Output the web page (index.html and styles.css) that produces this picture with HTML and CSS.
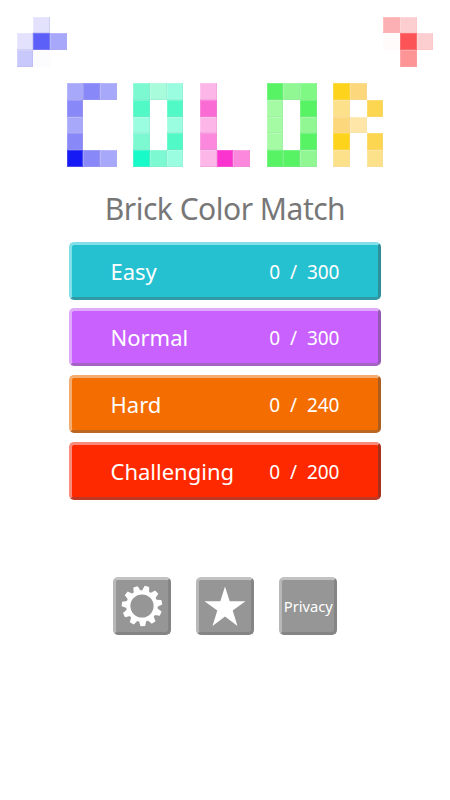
FILE: index.html
```
<!DOCTYPE html>
<html lang="en">
<head>
    <meta charset="UTF-8">
    <meta name="viewport" content="width=device-width, initial-scale=1.0">
    <title>Brick Color Match</title>
    <link rel="stylesheet" href="styles.css">
</head>
<body>
    <div class="corners">
        <div class="bricks blue">
            <i></i><i class="t1"></i><i></i>
            <i class="t1"></i><i class="t5"></i><i class="t3"></i>
            <i class="t2"></i><i class="t0"></i><i></i>
        </div>
        <div class="bricks red">
            <i class="t3"></i><i class="t2"></i><i></i>
            <i class="t0"></i><i class="t5"></i><i class="t2"></i>
            <i></i><i class="t4"></i><i></i>
        </div>
    </div>

    <div class="logo">
        <div class="bricks blue">
            <i class="t3"></i><i class="t4"></i><i class="t3"></i>
            <i class="t4"></i><i></i><i></i>
            <i class="t3"></i><i></i><i></i>
            <i class="t4"></i><i></i><i></i>
            <i class="t6"></i><i class="t4"></i><i class="t3"></i>
        </div>
        <div class="bricks mint">
            <i class="t4"></i><i class="t2"></i><i class="t3"></i>
            <i class="t5"></i><i></i><i class="t5"></i>
            <i class="t3"></i><i></i><i class="t3"></i>
            <i class="t4"></i><i></i><i class="t5"></i>
            <i class="t6"></i><i class="t4"></i><i class="t3"></i>
        </div>
        <div class="bricks pink">
            <i class="t3"></i><i></i><i></i>
            <i class="t5"></i><i></i><i></i>
            <i class="t3"></i><i></i><i></i>
            <i class="t4"></i><i></i><i></i>
            <i class="t3"></i><i class="t6"></i><i class="t4"></i>
        </div>
        <div class="bricks green">
            <i class="t6"></i><i class="t4"></i><i class="t5"></i>
            <i class="t3"></i><i></i><i class="t6"></i>
            <i class="t3"></i><i></i><i class="t4"></i>
            <i class="t3"></i><i></i><i class="t6"></i>
            <i class="t6"></i><i class="t6"></i><i class="t4"></i>
        </div>
        <div class="bricks gold">
            <i class="t6"></i><i class="t4"></i><i></i>
            <i class="t3"></i><i></i><i class="t5"></i>
            <i class="t4"></i><i class="t2"></i><i></i>
            <i class="t6"></i><i></i><i class="t5"></i>
            <i class="t3"></i><i></i><i class="t3"></i>
        </div>
    </div>

    <h1>Brick Color Match</h1>

    <div class="levels">
        <button class="level easy"><span class="name">Easy</span><span class="score">0&nbsp; /&nbsp; 300</span></button>
        <button class="level normal"><span class="name">Normal</span><span class="score">0&nbsp; /&nbsp; 300</span></button>
        <button class="level hard"><span class="name">Hard</span><span class="score">0&nbsp; /&nbsp; 240</span></button>
        <button class="level challenging"><span class="name">Challenging</span><span class="score">0&nbsp; /&nbsp; 200</span></button>
    </div>

    <div class="tools">
        <button class="tool" aria-label="Settings">
            <svg width="42" height="42" viewBox="-21 -21 42 42">
                <circle r="13.7" fill="none" stroke="#fff" stroke-width="4.2"/>
                <g fill="#fff" transform="rotate(14)">
                    <path id="tooth" d="M-3.6-15L-2.3-20.2H2.3L3.6-15Z"/>
                    <use href="#tooth" transform="rotate(32.73)"/>
                    <use href="#tooth" transform="rotate(65.45)"/>
                    <use href="#tooth" transform="rotate(98.18)"/>
                    <use href="#tooth" transform="rotate(130.91)"/>
                    <use href="#tooth" transform="rotate(163.64)"/>
                    <use href="#tooth" transform="rotate(196.36)"/>
                    <use href="#tooth" transform="rotate(229.09)"/>
                    <use href="#tooth" transform="rotate(261.82)"/>
                    <use href="#tooth" transform="rotate(294.55)"/>
                    <use href="#tooth" transform="rotate(327.27)"/>
                </g>
            </svg>
        </button>
        <button class="tool" aria-label="Rate">
            <svg width="42" height="42" viewBox="0 0 42 42">
                <path fill="#fff" d="M21 1.5L25.7 16.2H41.5L28.7 25.4L33.5 41L21 31.6L8.5 41L13.3 25.4L.5 16.2H16.3Z"/>
            </svg>
        </button>
        <button class="tool">Privacy</button>
    </div>
</body>
</html>
```
FILE: styles.css
```
body {
    width: 450px;
    height: 800px;
    margin: 0;
    overflow: hidden;
    background-color: #fff;
    font-family: "Noto Sans", "Open Sans", sans-serif;
}
.corners {
    display: flex;
    justify-content: space-between;
    padding: 16.67px 16.67px 0;
}
.logo {
    display: flex;
    justify-content: center;
    gap: 16.67px;
    margin-top: 16.67px;
}
.bricks {
    display: grid;
    grid-template-columns: repeat(3, 16.67px);
    grid-auto-rows: 16.67px;
}
.bricks i[class] {
    background-color: var(--fill);
    box-shadow: inset 0 0 0 1px rgba(255, 255, 255, 0.18), inset -1px -1px 0 var(--edge);
}
.bricks i.t0 {
    box-shadow: none;
}
.blue {
    --edge: rgba(90, 80, 190, 0.2);
}
.blue .t0 { --fill: #fcfcff; }
.blue .t1 { --fill: #e2e2fd; }
.blue .t2 { --fill: #c8c8fc; }
.blue .t3 { --fill: #a8a8fb; }
.blue .t4 { --fill: #8888f8; }
.blue .t5 { --fill: #5c60f8; }
.blue .t6 { --fill: #161af4; }
.red {
    --edge: rgba(220, 60, 60, 0.12);
}
.red .t0 { --fill: #fffbfb; }
.red .t2 { --fill: #fdced0; }
.red .t3 { --fill: #fdb0b3; }
.red .t4 { --fill: #fd9496; }
.red .t5 { --fill: #fc5356; }
.mint {
    --edge: rgba(30, 190, 150, 0.22);
}
.mint .t2 { --fill: #a8fbdb; }
.mint .t3 { --fill: #9bfde0; }
.mint .t4 { --fill: #7cf9d1; }
.mint .t5 { --fill: #50f9c6; }
.mint .t6 { --fill: #18fbc8; }
.pink {
    --edge: rgba(190, 40, 160, 0.22);
}
.pink .t3 { --fill: #fdb6e8; }
.pink .t4 { --fill: #fb88dc; }
.pink .t5 { --fill: #fa6cd4; }
.pink .t6 { --fill: #fb33cf; }
.green {
    --edge: rgba(40, 190, 70, 0.2);
}
.green .t3 { --fill: #a4fba4; }
.green .t4 { --fill: #90f793; }
.green .t5 { --fill: #80f984; }
.green .t6 { --fill: #58f364; }
.gold {
    --edge: rgba(220, 160, 40, 0.12);
}
.gold .t2 { --fill: #fde6a8; }
.gold .t3 { --fill: #fde08a; }
.gold .t4 { --fill: #fcd77c; }
.gold .t5 { --fill: #fcd551; }
.gold .t6 { --fill: #fdd31c; }
h1 {
    height: 42px;
    margin: 21px 0 12px;
    color: #777;
    font-size: 30px;
    font-weight: 400;
    letter-spacing: -0.5px;
    line-height: 42px;
    text-align: center;
    white-space: nowrap;
}
button {
    box-sizing: border-box;
    padding: 0;
    border: 3px solid;
    border-radius: 5px;
    color: #fff;
    font-family: inherit;
    cursor: pointer;
}
.levels {
    display: flex;
    flex-direction: column;
    align-items: center;
    gap: 8.67px;
}
.level {
    display: flex;
    justify-content: space-between;
    align-items: center;
    width: 312px;
    height: 58px;
    padding: 0 38.5px;
}
.name {
    font-size: 22px;
}
.score {
    padding-top: 2px;
    font-size: 19px;
}
.easy {
    background-color: #26c1d1;
    border-color: #84e0e8 #2e8f9a #3099a5 #84e0e8;
}
.normal {
    background-color: #c961ff;
    border-color: #e0aafa #9559b5 #a463c4 #e0aafa;
}
.hard {
    background-color: #f46d00;
    border-color: #f3ad73 #ad5d1c #bd6620 #f3ad73;
}
.challenging {
    background-color: #ff2900;
    border-color: #f88b7c #a9301b #bd3925 #f88b7c;
}
.tools {
    display: flex;
    justify-content: center;
    gap: 25px;
    margin-top: 77px;
}
.tool {
    display: flex;
    justify-content: center;
    align-items: center;
    width: 58.33px;
    height: 58px;
    background-color: #969696;
    border-color: #c2c2c2 #858585 #858585 #b8b8b8;
    font-size: 14.7px;
}
.tool svg {
    flex: none;
}
```
